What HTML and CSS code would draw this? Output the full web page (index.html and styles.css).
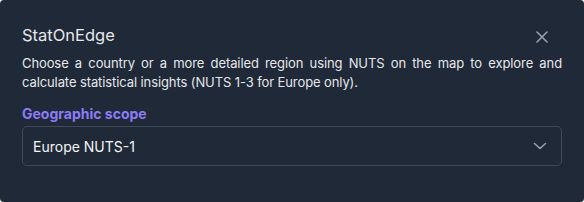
FILE: index.html
```html
<!DOCTYPE html>
<html lang="en">
<head>
<meta charset="utf-8">
<title>StatOnEdge</title>
<link rel="stylesheet" href="styles.css">
</head>
<body>
<div class="panel">
  <div class="header">
    <h1 class="title">StatOnEdge</h1>
    <button class="close" aria-label="Close">
      <svg width="12" height="12" viewBox="0 0 12 12"><path d="M1 1L11 11M11 1L1 11" stroke="currentColor" stroke-width="1.5" stroke-linecap="round" fill="none"/></svg>
    </button>
  </div>
  <p class="desc">Choose a country or a more detailed region using NUTS on the map to explore and calculate statistical insights (NUTS 1-3 for Europe only).</p>
  <label class="label">Geographic scope</label>
  <div class="select">
    <span class="value">Europe NUTS-1</span>
    <svg class="chev" width="14" height="8" viewBox="0 0 14 8"><path d="M1.5 1.5L7 6.5L12.5 1.5" stroke="currentColor" stroke-width="1.5" stroke-linecap="round" stroke-linejoin="round" fill="none"/></svg>
  </div>
</div>
</body>
</html>
```
FILE: styles.css
```css
html, body {
  margin: 0;
  padding: 0;
  background: #ffffff;
}
body {
  font-family: Inter, "Noto Sans", sans-serif;
  color: #e5e7eb;
}
.panel {
  box-sizing: border-box;
  width: 584px;
  height: 202px;
  background: #1f2937;
  border-radius: 4px;
  padding: 24px 22px 0 22px;
  display: flex;
  flex-direction: column;
}
.header {
  display: flex;
  align-items: center;
  justify-content: space-between;
  height: 22px;
}
.title {
  margin: 0;
  font-size: 16.5px;
  font-weight: 400;
  color: #e5e7eb;
  line-height: 22px;
}
.close {
  background: none;
  border: 0;
  padding: 0;
  margin: 3px 14px 0 0;
  color: #9ca3af;
  display: flex;
}
.desc {
  margin: 8px 0 0 0;
  font-size: 13px;
  letter-spacing: -0.1px;
  line-height: 19px;
  text-align: justify;
  color: #e5e7eb;
}
.label {
  margin-top: 13px;
  font-size: 14px;
  font-weight: 700;
  line-height: 18px;
  color: #8b7cf6;
}
.select {
  margin-top: 3px;
  box-sizing: border-box;
  height: 40px;
  border: 1px solid #3f4856;
  border-radius: 5px;
  display: flex;
  align-items: center;
  justify-content: space-between;
  padding: 0 14px 0 10px;
}
.value {
  font-size: 14px;
  color: #f3f4f6;
}
.chev {
  color: #9ca3af;
}
```
